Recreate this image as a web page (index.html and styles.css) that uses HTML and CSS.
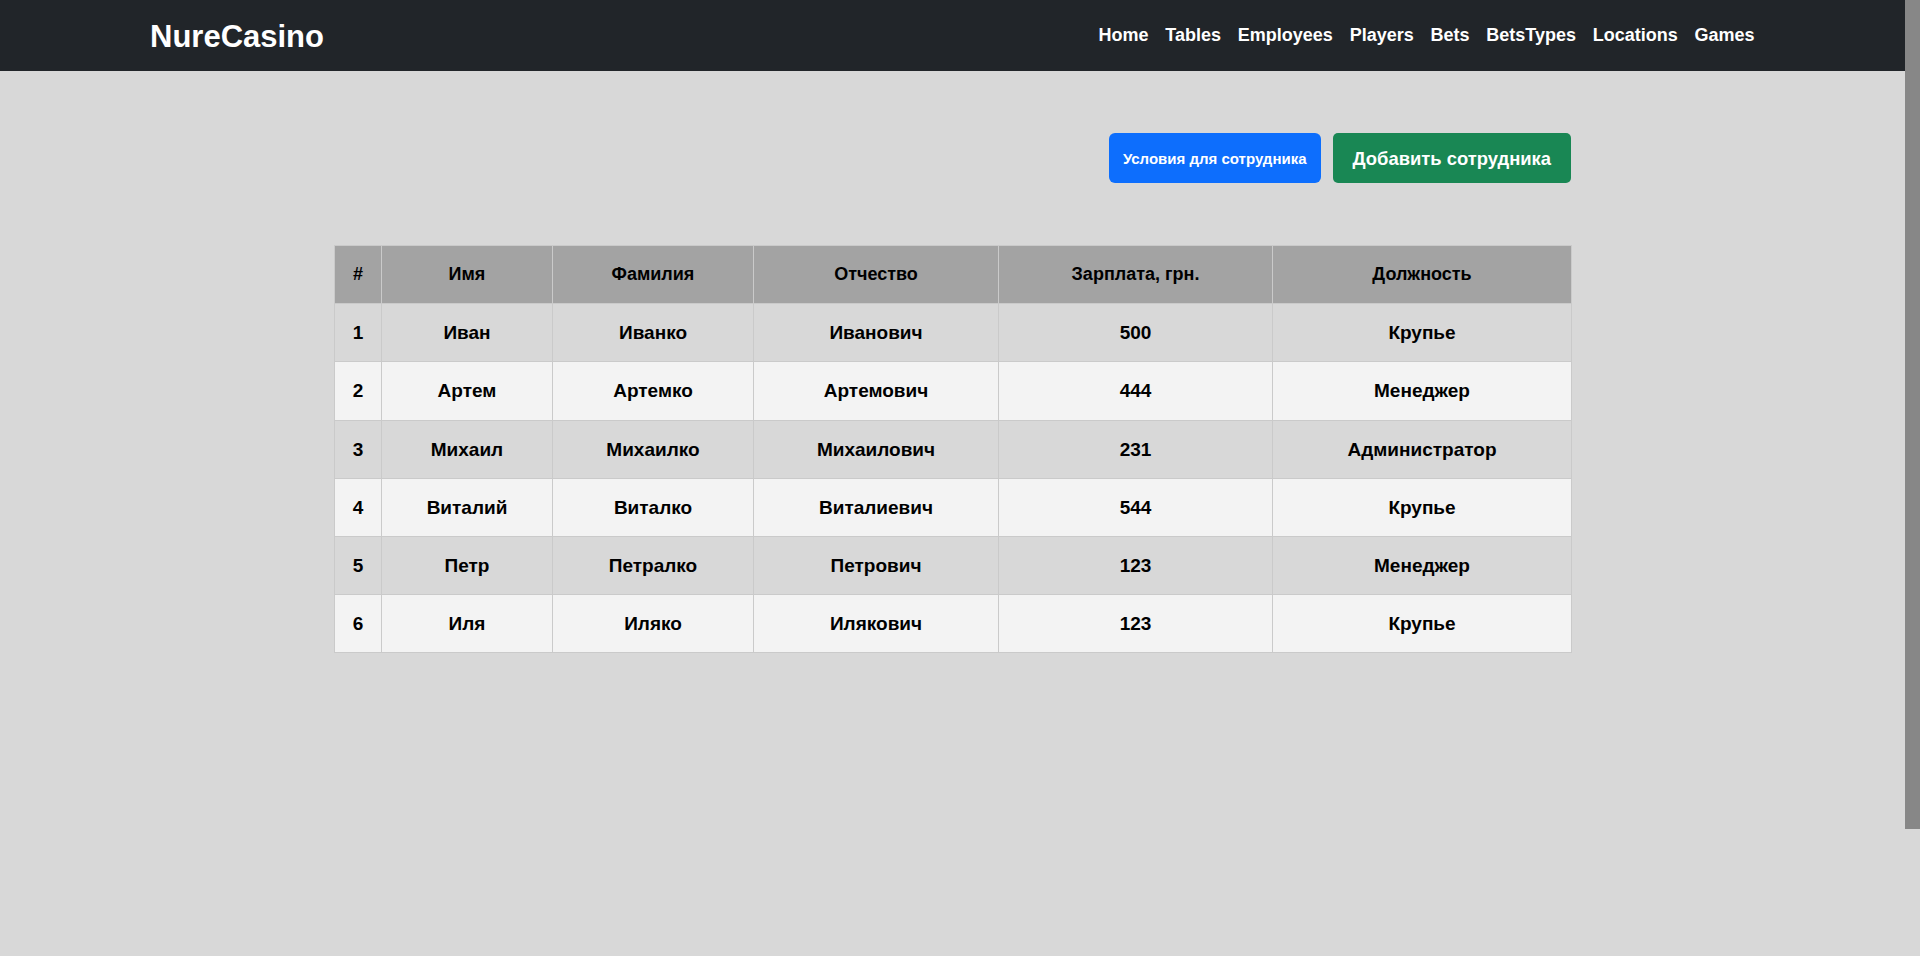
FILE: index.html
```html
<!DOCTYPE html>
<html lang="ru">
<head>
<meta charset="utf-8">
<title>NureCasino</title>
<link rel="stylesheet" href="styles.css">
</head>
<body>
<div class="page">
  <header class="navbar">
    <a class="brand" href="#">NureCasino</a>
    <nav class="nav">
      <a class="nav-link" href="#">Home</a>
      <a class="nav-link" href="#">Tables</a>
      <a class="nav-link" href="#">Employees</a>
      <a class="nav-link" href="#">Players</a>
      <a class="nav-link" href="#">Bets</a>
      <a class="nav-link" href="#">BetsTypes</a>
      <a class="nav-link" href="#">Locations</a>
      <a class="nav-link" href="#">Games</a>
    </nav>
  </header>
  <main class="content">
    <div class="actions">
      <button class="btn btn-primary">Условия для сотрудника</button>
      <button class="btn btn-success">Добавить сотрудника</button>
    </div>
    <table class="emp-table">
      <colgroup>
        <col class="c-num"><col class="c-name"><col class="c-surname"><col class="c-patr"><col class="c-salary"><col class="c-pos">
      </colgroup>
      <thead>
        <tr><th>#</th><th>Имя</th><th>Фамилия</th><th>Отчество</th><th>Зарплата, грн.</th><th>Должность</th></tr>
      </thead>
      <tbody>
        <tr><td>1</td><td>Иван</td><td>Иванко</td><td>Иванович</td><td>500</td><td>Крупье</td></tr>
        <tr><td>2</td><td>Артем</td><td>Артемко</td><td>Артемович</td><td>444</td><td>Менеджер</td></tr>
        <tr><td>3</td><td>Михаил</td><td>Михаилко</td><td>Михаилович</td><td>231</td><td>Администратор</td></tr>
        <tr><td>4</td><td>Виталий</td><td>Виталко</td><td>Виталиевич</td><td>544</td><td>Крупье</td></tr>
        <tr><td>5</td><td>Петр</td><td>Петралко</td><td>Петрович</td><td>123</td><td>Менеджер</td></tr>
        <tr><td>6</td><td>Иля</td><td>Иляко</td><td>Илякович</td><td>123</td><td>Крупье</td></tr>
      </tbody>
    </table>
  </main>
</div>
<div class="scrollbar"><div class="scrollbar-thumb"></div></div>
</body>
</html>
```
FILE: styles.css
```css
html, body {
  margin: 0;
  padding: 0;
  height: 956px;
  overflow: hidden;
}
body {
  display: flex;
  background: #d8d8d8;
  font-family: "Liberation Sans", Arial, sans-serif;
  color: #000;
}
.page {
  flex: 1;
  min-width: 0;
  display: flex;
  flex-direction: column;
}
.navbar {
  height: 71px;
  background: #212529;
  display: flex;
  align-items: center;
  justify-content: space-between;
  padding: 0 142px 0 150px;
  box-sizing: border-box;
}
.brand {
  color: #fff;
  text-decoration: none;
  font-weight: bold;
  font-size: 31px;
  line-height: 36px;
  margin-top: 2px;
}
.nav {
  display: flex;
  align-items: center;
  margin-top: -2px;
}
.nav-link {
  color: #fff;
  text-decoration: none;
  font-weight: bold;
  font-size: 18px;
  line-height: 24px;
  padding: 0 8.4px;
}
.content {
  width: 1237px;
  margin: 0 auto;
  padding-top: 62px;
}
.actions {
  display: flex;
  justify-content: flex-end;
  gap: 12px;
}
.btn {
  border: none;
  color: #fff;
  font-family: "Liberation Sans", Arial, sans-serif;
  font-weight: bold;
  border-radius: 6px;
  cursor: pointer;
}
.btn-primary {
  background: #0d6efd;
  font-size: 15px;
  padding: 0 14px;
}
.btn-success {
  background: #198754;
  font-size: 18.4px;
  line-height: 27px;
  padding: 11.5px 20px;
  border-radius: 5px;
}
.emp-table {
  margin-top: 62px;
  width: 1237px;
  border-collapse: collapse;
  table-layout: fixed;
}
.c-num { width: 47px; }
.c-name { width: 171px; }
.c-surname { width: 201px; }
.c-patr { width: 245px; }
.c-salary { width: 274px; }
.c-pos { width: 299px; }
.emp-table th,
.emp-table td {
  border: 1px solid #cacaca;
  text-align: center;
  font-weight: bold;
  font-size: 19px;
  line-height: 27px;
  padding: 15.1px 4px;
}
.emp-table thead th {
  background: #a3a3a3;
  font-size: 18px;
}
.emp-table tbody tr:nth-child(odd) td {
  background: #d8d8d8;
}
.emp-table tbody tr:nth-child(even) td {
  background: #f3f3f3;
}
.scrollbar {
  width: 15px;
  flex: 0 0 15px;
  background: #d8d8d8;
}
.scrollbar-thumb {
  height: 829px;
  background: #878787;
}
```
